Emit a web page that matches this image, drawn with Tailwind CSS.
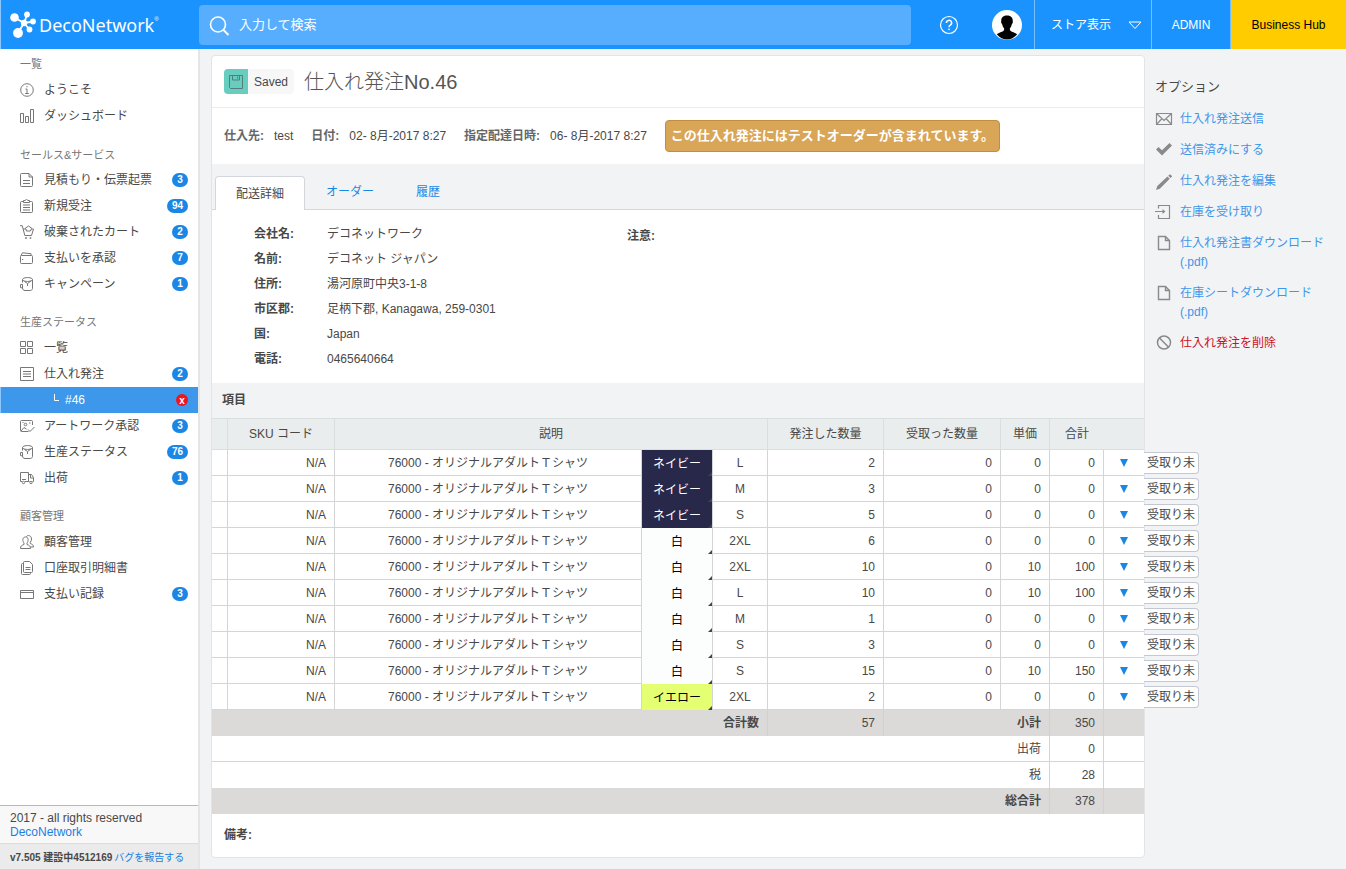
<!DOCTYPE html>
<html lang="ja">
<head>
    <meta charset="UTF-8">
    <meta name="viewport" content="width=device-width, initial-scale=1.0">
    <title>仕入れ発注No.46</title>
    <script src="https://cdn.jsdelivr.net/npm/@tailwindcss/browser@4"></script>
</head>
<body class="min-h-screen flex flex-col bg-[#f2f3f5] font-['Liberation_Sans','Noto_Sans_CJK_JP',sans-serif] text-xs text-[#484848]">

    <!-- Header -->
    <header class="h-[49px] flex items-center bg-[#1a93ff] border-l border-[#8cc8ff] text-white">
        <a href="#" class="w-[198px] shrink-0 flex items-center pl-2">
            <svg class="w-7 h-7 shrink-0" viewBox="0 0 28 28" fill="#fff">
                <path d="M5.500 6.500L15 12M18 4L15 12M24.500 10.500L15 12M20.500 18.500L15 12M9 22L15 12" stroke="#fff" stroke-width="1.800" fill="none"/>
                <circle cx="5.500" cy="6.500" r="4.300"/>
                <circle cx="18" cy="3.500" r="2.900"/>
                <circle cx="24" cy="10.500" r="2.900"/>
                <circle cx="20.500" cy="18.500" r="2.900"/>
                <circle cx="9" cy="22" r="4.900"/>
                <circle cx="15" cy="12" r="3.200"/>
            </svg>
            <span class="ml-[2px] font-['Noto_Sans',sans-serif] text-lg">DecoNetwork</span>
            <span class="text-[6px] mb-3">®</span>
        </a>
        <label class="flex-1 h-10 flex items-center gap-2 pl-[10px] rounded bg-[#57aeff]">
            <svg class="w-[22px] h-[22px] shrink-0" viewBox="0 0 22 22" fill="none" stroke="#fff" stroke-width="1.600">
                <circle cx="9" cy="10.500" r="7.500"/>
                <path d="M14.500 16l5 5" stroke-width="2"/>
            </svg>
            <input type="search" aria-label="検索" placeholder="入力して検索" class="flex-1 min-w-0 bg-transparent outline-none text-[13px] placeholder:text-white">
        </label>
        <button aria-label="ヘルプ" class="ml-7 w-5 h-5">
            <svg class="w-5 h-5" viewBox="0 0 20 20" fill="none" stroke="#fff" stroke-width="1.200">
                <circle cx="10" cy="10" r="8.500"/>
                <path d="M7.400 8a2.600 2.600 0 1 1 3.900 2.200c-.9.500-1.300.9-1.300 2" stroke-width="1.500"/>
                <circle cx="10" cy="14.300" r=".6" fill="#fff" stroke-width=".6"/>
            </svg>
        </button>
        <button aria-label="アカウント" class="ml-[33px] mr-3 w-[30px] h-[30px]">
            <svg class="w-[30px] h-[30px]" viewBox="0 0 30 30">
                <circle cx="15" cy="15" r="15" fill="#fff"/>
                <path d="M15 5.500c-4.300 0-6 2.500-5.700 5.500-.5.800 0 2.500.8 3 .4 2 1 3.200 2 4.200v2c-1.500 1.900-5.500 2.200-7.300 4C7.500 27.800 11.500 29.500 15 29.500s7.500-1.700 10.200-5.300c-1.800-1.800-5.800-2.100-7.300-4v-2c1-1 1.600-2.200 2-4.200.8-.5 1.300-2.200.8-3C21 8 19.300 5.500 15 5.500z" fill="#000"/>
            </svg>
        </button>
        <button class="h-full w-[117px] flex items-center justify-between pl-4 pr-[10px] border-l border-[#76bfff]">
            ストア表示
            <svg class="w-3 h-2" viewBox="0 0 12 8" fill="none" stroke="#fff"><path d="M0 1h12L6 7.500z"/></svg>
        </button>
        <a href="#" class="h-full w-20 flex items-center justify-center border-x border-[#76bfff]">ADMIN</a>
        <a href="#" class="h-full w-[115px] flex items-center justify-center bg-[#fc0] text-black">Business Hub</a>
    </header>

    <div class="flex-1 flex items-stretch">

        <!-- Sidebar -->
        <aside class="w-[200px] shrink-0 flex flex-col bg-white border-r-2 border-[#e4e5e8]">
            <nav class="flex-1 pt-[2px]">
                <h3 class="h-[26px] flex items-center pl-5 text-[11px] text-[#777]">一覧</h3>
                <a href="#" class="h-[26px] flex items-center gap-[10px] pl-5 pr-[10px]">
                    <svg class="w-[14px] h-[14px]" viewBox="0 0 14 14" fill="none" stroke="#777"><circle cx="7" cy="7" r="6.300"/><path d="M5.500 6H7v4.500M5.200 10.500h3.600M7 3v1.300"/></svg>
                    <span>ようこそ</span>
                </a>
                <a href="#" class="h-[26px] flex items-center gap-[10px] pl-5 pr-[10px]">
                    <svg class="w-[14px] h-[14px]" viewBox="0 0 14 14" fill="none" stroke="#777"><path d="M.5 4.500h3v9h-3zM5.500 7.500h3v6h-3zM10.500.5h3v13h-3z"/></svg>
                    <span>ダッシュボード</span>
                </a>

                <h3 class="h-[26px] mt-3 flex items-center pt-[2px] pl-5 text-[11px] text-[#777]">セールス&amp;サービス</h3>
                <a href="#" class="h-[26px] flex items-center gap-[10px] pl-5 pr-[10px]">
                    <svg class="w-[14px] h-[14px]" viewBox="0 0 14 14" fill="none" stroke="#777"><path d="M.5 1.500a1 1 0 0 1 1-1H9L12.500 4v8.500a1 1 0 0 1-1 1h-10a1 1 0 0 1-1-1zM9 .5V4h3.500M3 7.500h7M3 10.500h7"/></svg>
                    <span>見積もり・伝票起票</span>
                    <span class="ml-auto min-w-4 h-[14px] px-[5px] rounded-full bg-[#1a86e6] text-white text-[10px] leading-[14px] font-bold text-center">3</span>
                </a>
                <a href="#" class="h-[26px] flex items-center gap-[10px] pl-5 pr-[10px]">
                    <svg class="w-[14px] h-[14px]" viewBox="0 0 14 14" fill="none" stroke="#777"><path d="M3.500 2.500H1.500a1 1 0 0 0-1 1v9a1 1 0 0 0 1 1h10a1 1 0 0 0 1-1v-9a1 1 0 0 0-1-1h-2M3.500 3.500v-2h1.500L6.500.3 8 1.500h1.500v2zM3 6h7M3 8.500h7M3 11h7"/></svg>
                    <span>新規受注</span>
                    <span class="ml-auto min-w-4 h-[14px] px-[5px] rounded-full bg-[#1a86e6] text-white text-[10px] leading-[14px] font-bold text-center">94</span>
                </a>
                <a href="#" class="h-[26px] flex items-center gap-[10px] pl-5 pr-[10px]">
                    <svg class="w-[14px] h-[14px]" viewBox="0 0 14 14" fill="none" stroke="#777"><path d="M0 .7h2.300l2.500 9.800h6.700l2-6.500H11M3.200 4H6M5 3.500L8.500 1 12 3.500M6 4l.5 2h4l.8-2"/><circle cx="6" cy="13" r=".6"/><circle cx="10.500" cy="13" r=".6"/></svg>
                    <span>破棄されたカート</span>
                    <span class="ml-auto min-w-4 h-[14px] px-[5px] rounded-full bg-[#1a86e6] text-white text-[10px] leading-[14px] font-bold text-center">2</span>
                </a>
                <a href="#" class="h-[26px] flex items-center gap-[10px] pl-5 pr-[10px]">
                    <svg class="w-[14px] h-[14px]" viewBox="0 0 14 14" fill="none" stroke="#777"><path d="M1.500 4.500h10a1 1 0 0 1 1 1v6a1 1 0 0 1-1 1h-10a1 1 0 0 1-1-1v-6a1 1 0 0 1 1-1zM1 4.500L2.500 1.800l8.500.9v1.800M2 8.500h1.200"/></svg>
                    <span>支払いを承認</span>
                    <span class="ml-auto min-w-4 h-[14px] px-[5px] rounded-full bg-[#1a86e6] text-white text-[10px] leading-[14px] font-bold text-center">7</span>
                </a>
                <a href="#" class="h-[26px] flex items-center gap-[10px] pl-5 pr-[10px]">
                    <svg class="w-[14px] h-[14px]" viewBox="0 0 14 14" fill="none" stroke="#777"><ellipse cx="7.500" cy="2.500" rx="5" ry="2"/><path d="M2.500 2.500v3M12.500 2.500v9c0 1-1 2-2 2H5c-1.500 0-2.500-1-2.500-2.500V7.500H.5v3l2 .5M4.500 4.500l3 2 3.500-2.500M7.500 6.500V9"/></svg>
                    <span>キャンペーン</span>
                    <span class="ml-auto min-w-4 h-[14px] px-[5px] rounded-full bg-[#1a86e6] text-white text-[10px] leading-[14px] font-bold text-center">1</span>
                </a>

                <h3 class="h-[26px] mt-3 flex items-center pl-5 text-[11px] text-[#777]">生産ステータス</h3>
                <a href="#" class="h-[26px] flex items-center gap-[10px] pl-5 pr-[10px]">
                    <svg class="w-[14px] h-[14px]" viewBox="0 0 14 14" fill="none" stroke="#777"><path d="M.5.5h5v5h-5zM7.500.5h5v5h-5zM.5 7.500h5v5h-5zM7.500 7.500h5v5h-5z"/></svg>
                    <span>一覧</span>
                </a>
                <a href="#" class="h-[26px] flex items-center gap-[10px] pl-5 pr-[10px]">
                    <svg class="w-[14px] h-[14px]" viewBox="0 0 14 14" fill="none" stroke="#777"><path d="M.5.5h13v13H.5zM3 4.500h8M3 7h8M3 9.500h8"/></svg>
                    <span>仕入れ発注</span>
                    <span class="ml-auto min-w-4 h-[14px] px-[5px] rounded-full bg-[#1a86e6] text-white text-[10px] leading-[14px] font-bold text-center">2</span>
                </a>
                <div class="h-[26px] flex items-center pl-[52px] pr-[10px] bg-[#3d97ea] border-l border-[#8cc8ff] text-white">
                    <svg class="w-2 h-2 mb-1" viewBox="0 0 8 8" fill="none" stroke="#fff"><path d="M1.500 0v6.500H6"/></svg>
                    <a href="#" class="ml-1">#46</a>
                    <button aria-label="閉じる" class="ml-auto w-3 h-3 rounded-full bg-[#f0141e] text-[10px] leading-[11px] font-bold">x</button>
                </div>
                <a href="#" class="h-[26px] flex items-center gap-[10px] pl-5 pr-[10px]">
                    <svg class="w-[14px] h-[14px] overflow-visible" viewBox="0 0 14 14" fill="none" stroke="#777"><path d="M12.500 6V2.500a1 1 0 0 0-1-1h-10a1 1 0 0 0-1 1v9a1 1 0 0 0 1 1h7M1 12l3-3.500 2.500 1.500M8 10.500l2 2L14.500 8M2.500 3.500h1M9 4h1.500"/><circle cx="5.500" cy="5.500" r="1.300"/></svg>
                    <span>アートワーク承認</span>
                    <span class="ml-auto min-w-4 h-[14px] px-[5px] rounded-full bg-[#1a86e6] text-white text-[10px] leading-[14px] font-bold text-center">3</span>
                </a>
                <a href="#" class="h-[26px] flex items-center gap-[10px] pl-5 pr-[10px]">
                    <svg class="w-[14px] h-[14px]" viewBox="0 0 14 14" fill="none" stroke="#777"><ellipse cx="7.500" cy="2.500" rx="5" ry="2"/><path d="M2.500 2.500v3M12.500 2.500v9c0 1-1 2-2 2H5c-1.500 0-2.500-1-2.500-2.500V7.500H.5v3l2 .5M4.500 4.500l3 2 3.500-2.500M7.500 6.500V9"/></svg>
                    <span>生産ステータス</span>
                    <span class="ml-auto min-w-4 h-[14px] px-[5px] rounded-full bg-[#1a86e6] text-white text-[10px] leading-[14px] font-bold text-center">76</span>
                </a>
                <a href="#" class="h-[26px] flex items-center gap-[10px] pl-5 pr-[10px]">
                    <svg class="w-[14px] h-[14px]" viewBox="0 0 14 14" fill="none" stroke="#777"><path d="M2 10.500H.5v-9h8v9H5M8.500 3.500h3l2 3v4H12.500M9.500 10.500h-1M10.500 4v3h3M2 8.500h4"/><circle cx="3.500" cy="11.500" r="1.200"/><circle cx="11" cy="11.500" r="1.200"/></svg>
                    <span>出荷</span>
                    <span class="ml-auto min-w-4 h-[14px] px-[5px] rounded-full bg-[#1a86e6] text-white text-[10px] leading-[14px] font-bold text-center">1</span>
                </a>

                <h3 class="h-[26px] mt-3 flex items-center pl-5 text-[11px] text-[#777]">顧客管理</h3>
                <a href="#" class="h-[26px] flex items-center gap-[10px] pl-5 pr-[10px]">
                    <svg class="w-[14px] h-[14px]" viewBox="0 0 14 14" fill="none" stroke="#777"><path d="M.5 13.500c0-2.500 1-3 3.500-4V8C2.500 6.500 2 2 5.500 2S8.500 6.500 7 8v1.500c2.500 1 3.500 1.500 3.500 4zM6.500 1.500C8-.3 11.500.5 11.500 4c0 1.500-.5 2.500-1.200 3.200V8.500c2 .8 3.200 1.500 3.200 3.500h-3"/></svg>
                    <span>顧客管理</span>
                </a>
                <a href="#" class="h-[26px] flex items-center gap-[10px] pl-5 pr-[10px]">
                    <svg class="w-[14px] h-[14px]" viewBox="0 0 14 14" fill="none" stroke="#777"><path d="M4.500.5h5l3 3v7a1 1 0 0 1-1 1h-7a1 1 0 0 1-1-1v-9a1 1 0 0 1 1-1zM3.500 2.500h-1a1 1 0 0 0-1 1v9a1 1 0 0 0 1 1h7a1 1 0 0 0 1-1v-1M5.500 6.500h5M5.500 8.500h5"/></svg>
                    <span>口座取引明細書</span>
                </a>
                <a href="#" class="h-[26px] flex items-center gap-[10px] pl-5 pr-[10px]">
                    <svg class="w-[14px] h-[14px]" viewBox="0 0 14 14" fill="none" stroke="#777"><path d="M.5 3.500h13v8H.5zM.5 5.500h13"/></svg>
                    <span>支払い記録</span>
                    <span class="ml-auto min-w-4 h-[14px] px-[5px] rounded-full bg-[#1a86e6] text-white text-[10px] leading-[14px] font-bold text-center">3</span>
                </a>
            </nav>

            <div class="border-t border-[#b4b8c6] bg-[#f8f8f8] pl-[10px] pt-[5px] pb-1 leading-[14px]">
                <p>2017 - all rights reserved</p>
                <a href="#" class="text-[#1a7fe0]">DecoNetwork</a>
            </div>
            <div class="h-[26px] flex items-center pt-[2px] border-t border-[#dcdcdc] bg-[#ebebeb] pl-[10px] text-[10px] whitespace-nowrap">
                <b>v7.505 建設中4512169</b>
                <a href="#" class="ml-[2px] text-[#1a7fe0]">バグを報告する</a>
            </div>
        </aside>

        <!-- Purchase order -->
        <main class="flex-1 min-w-0 pl-[11px] pt-[6px] pb-[11px]">
            <div class="h-full bg-white border border-[#e2e4e7] rounded">
                <div class="h-[52px] flex items-center pl-3 border-b border-[#ececee]">
                    <span class="flex items-center bg-[#f7f7f7] rounded-sm">
                        <span class="w-6 h-[25px] flex items-center justify-center rounded-l-sm bg-[#66cdbf]">
                            <svg class="w-[14px] h-[14px]" viewBox="0 0 14 14" fill="none" stroke="#557d78"><path d="M.5.5h13v13h-12l-1-1zM3.500.5v4.500h7V.5M8.500 1.500v2"/></svg>
                        </span>
                        <span class="px-[6px]">Saved</span>
                    </span>
                    <h1 class="ml-[10px] text-xl font-light text-[#555]">仕入れ発注No.46</h1>
                </div>

                <div class="h-14 flex items-center pl-3 whitespace-nowrap">
                    <b class="text-[#666]">仕入先:</b><span class="ml-[10px]">test</span>
                    <b class="ml-[18px] text-[#666]">日付:</b><span class="ml-[10px]">02- 8月-2017 8:27</span>
                    <b class="ml-[18px] text-[#666]">指定配達日時:</b><span class="ml-[10px]">06- 8月-2017 8:27</span>
                    <strong class="ml-[18px] h-8 flex items-center px-[5px] rounded-sm border border-[#c08e3c] bg-[#d9a556] text-white text-[13px]">この仕入れ発注にはテストオーダーが含まれています。</strong>
                </div>

                <!-- Tabs -->
                <div class="h-[46px] flex items-end pl-[3px] bg-[#f2f3f5] border-b border-[#d3d6da]">
                    <button class="w-[90px] h-[34px] -mb-px bg-white border border-b-0 border-[#d3d6da] rounded-t-sm">配送詳細</button>
                    <button class="h-[34px] px-[21px] text-[#1a86e6]">オーダー</button>
                    <button class="h-[34px] px-[21px] text-[#1a86e6]">履歴</button>
                </div>

                <!-- Delivery details -->
                <div class="flex pl-[42px] pt-3 pb-[11px]">
                    <dl class="w-[373px] grid grid-cols-[73px_1fr] leading-[25px]">
                        <dt class="font-bold">会社名:</dt><dd>デコネットワーク</dd>
                        <dt class="font-bold">名前:</dt><dd>デコネット ジャパン</dd>
                        <dt class="font-bold">住所:</dt><dd>湯河原町中央3-1-8</dd>
                        <dt class="font-bold">市区郡:</dt><dd>足柄下郡, Kanagawa, 259-0301</dd>
                        <dt class="font-bold">国:</dt><dd>Japan</dd>
                        <dt class="font-bold">電話:</dt><dd>0465640664</dd>
                    </dl>
                    <b class="leading-7">注意:</b>
                </div>

                <h2 class="h-[35px] flex items-center pb-[2px] pl-[10px] bg-[#f2f3f5] font-bold">項目</h2>

                <table class="w-full table-fixed border-separate border-spacing-0">
                    <colgroup>
                        <col class="w-4"><col class="w-[107px]"><col><col class="w-[71px]"><col class="w-[55px]">
                        <col class="w-[116px]"><col class="w-[117px]"><col class="w-[49px]"><col class="w-[54px]"><col class="w-10">
                    </colgroup>
                    <thead>
                        <tr class="h-8 bg-[#e9eded]">
                            <th class="border-y border-r border-[#d9dfdf]"></th>
                            <th class="border-y border-r border-[#d9dfdf] font-normal">SKU コード</th>
                            <th colspan="3" class="border-y border-r border-[#d9dfdf] font-normal">説明</th>
                            <th class="border-y border-r border-[#d9dfdf] font-normal">発注した数量</th>
                            <th class="border-y border-r border-[#d9dfdf] font-normal">受取った数量</th>
                            <th class="border-y border-r border-[#d9dfdf] font-normal">単価</th>
                            <th class="border-y border-[#d9dfdf] font-normal">合計</th>
                            <th class="border-y border-[#d9dfdf]"></th>
                        </tr>
                    </thead>
                    <tbody id="items"></tbody>
                    <tfoot class="text-right">
                        <tr class="h-[26px] bg-[#dbdad9]">
                            <th colspan="5" class="pr-2 border-r border-[#d0d0d0]">合計数</th>
                            <td class="pr-2 border-r border-[#d0d0d0]">57</td>
                            <th colspan="2" class="pr-2 border-r border-[#d0d0d0]">小計</th>
                            <td class="pr-2 border-r border-[#d0d0d0]">350</td>
                            <td></td>
                        </tr>
                        <tr class="h-[26px]">
                            <th colspan="8" class="pr-2 border-b border-r border-[#d3d5d7] font-normal">出荷</th>
                            <td class="pr-2 border-b border-r border-[#d3d5d7]">0</td>
                            <td class="border-b border-[#d3d5d7]"></td>
                        </tr>
                        <tr class="h-[26px]">
                            <th colspan="8" class="pr-2 border-r border-[#d3d5d7] font-normal">税</th>
                            <td class="pr-2 border-r border-[#d3d5d7]">28</td>
                            <td></td>
                        </tr>
                        <tr class="h-[26px] bg-[#dbdad9]">
                            <th colspan="8" class="pr-2 border-r border-[#d0d0d0]">総合計</th>
                            <td class="pr-2 border-r border-[#d0d0d0]">378</td>
                            <td></td>
                        </tr>
                    </tfoot>
                </table>

                <p class="h-[42px] flex items-center pl-3 font-bold">備考:</p>
            </div>
        </main>

        <!-- Options -->
        <aside class="w-[201px] shrink-0 pl-[10px] pt-7">
            <h2 class="text-[13px] leading-5">オプション</h2>
            <ul class="mt-[13px] flex flex-col gap-3 leading-[19px] text-[#3d97ea]">
                <li class="flex gap-[7px]">
                    <svg class="w-[18px] h-[18px] shrink-0" viewBox="0 0 18 18" fill="none" stroke="#8a8a8a" stroke-width="1.200"><path d="M1.500 3.500h15v11h-15zM1.500 3.500L9 10.500l7.500-7M1.500 14.500l5.500-6M16.500 14.500l-5.500-6"/></svg>
                    <a href="#">仕入れ発注送信</a>
                </li>
                <li class="flex gap-[7px]">
                    <svg class="w-[18px] h-[18px] shrink-0" viewBox="0 0 18 18" fill="#8a8a8a"><path d="M1 8.500L3.500 6 7 9.300 14.500 2 17 4.500l-10 10z"/></svg>
                    <a href="#">送信済みにする</a>
                </li>
                <li class="flex gap-[7px]">
                    <svg class="w-[18px] h-[18px] shrink-0" viewBox="0 0 18 18" fill="#8a8a8a"><path d="M1 18l1.300-4L12.500 4.500l2.200 2.200L4.800 16.700zM13.200 3.800L15 2.300l2.200 2-1.700 1.800z"/></svg>
                    <a href="#">仕入れ発注を編集</a>
                </li>
                <li class="flex gap-[7px]">
                    <svg class="w-[18px] h-[18px] shrink-0" viewBox="0 0 18 18" fill="none" stroke="#8a8a8a" stroke-width="1.200"><path d="M3.500 5.500v-3h11v13h-11v-3.500M0 8.500h9"/><path d="M7.500 6L10.500 8.500l-3 2.500z" fill="#8a8a8a" stroke="none"/></svg>
                    <a href="#">在庫を受け取り</a>
                </li>
                <li class="flex gap-[7px]">
                    <svg class="w-[18px] h-[18px] shrink-0" viewBox="0 0 18 18" fill="none" stroke="#8a8a8a" stroke-width="1.400"><path d="M3.500 2.500h7l4 4v9h-11zM10.500 2.500v4h4"/></svg>
                    <a href="#">仕入れ発注書ダウンロード<br>(.pdf)</a>
                </li>
                <li class="flex gap-[7px]">
                    <svg class="w-[18px] h-[18px] shrink-0" viewBox="0 0 18 18" fill="none" stroke="#8a8a8a" stroke-width="1.400"><path d="M3.500 2.500h7l4 4v9h-11zM10.500 2.500v4h4"/></svg>
                    <a href="#">在庫シートダウンロード<br>(.pdf)</a>
                </li>
                <li class="flex gap-[7px]">
                    <svg class="w-[18px] h-[18px] shrink-0" viewBox="0 0 18 18" fill="none" stroke="#8a8a8a" stroke-width="1.500"><circle cx="9" cy="8.500" r="6.500"/><path d="M4.500 4l9 9"/></svg>
                    <a href="#" class="text-[#d0101c]">仕入れ発注を削除</a>
                </li>
            </ul>
        </aside>
    </div>

    <script>
        const colors = {
            'ネイビー': 'bg-[#28284a] text-white',
            '白': 'bg-[#fcfefe] text-black',
            'イエロー': 'bg-[#e5ff73] text-black'
        };

        // color, size, ordered, received, unit price, total
        const items = [
            ['ネイビー', 'L', 2, 0, 0, 0],
            ['ネイビー', 'M', 3, 0, 0, 0],
            ['ネイビー', 'S', 5, 0, 0, 0],
            ['白', '2XL', 6, 0, 0, 0],
            ['白', '2XL', 10, 0, 10, 100],
            ['白', 'L', 10, 0, 10, 100],
            ['白', 'M', 1, 0, 0, 0],
            ['白', 'S', 3, 0, 0, 0],
            ['白', 'S', 15, 0, 10, 150],
            ['イエロー', '2XL', 2, 0, 0, 0]
        ];

        document.getElementById('items').innerHTML = items.map(([color, size, ordered, received, price, total]) => `
            <tr class="h-[26px] text-right">
                <td class="border-b border-r border-[#d3d5d7]"></td>
                <td class="pr-2 border-b border-r border-[#d3d5d7]">N/A</td>
                <td class="border-b border-r border-[#d3d5d7] text-center">76000 - オリジナルアダルトＴシャツ</td>
                <td class="relative pt-[2px] border-r border-[#d3d5d7] text-center ${colors[color]}">${color}
                    <svg class="absolute right-0 bottom-0 w-1 h-1" viewBox="0 0 4 4" fill="#444"><path d="M4 0v4H0z"/></svg>
                </td>
                <td class="border-b border-r border-[#d3d5d7] text-center">${size}</td>
                <td class="pr-2 border-b border-r border-[#d3d5d7]">${ordered}</td>
                <td class="pr-2 border-b border-r border-[#d3d5d7]">${received}</td>
                <td class="pr-2 border-b border-r border-[#d3d5d7]">${price}</td>
                <td class="pr-2 border-b border-r border-[#d3d5d7]">${total}</td>
                <td class="relative border-b border-[#d3d5d7]">
                    <svg class="mx-auto w-2 h-2" viewBox="0 0 8 8" fill="#1a86e6"><path d="M0 0h8L4 8z"/></svg>
                    <button class="absolute left-full top-[2px] h-[22px] px-[3px] bg-white border border-l-0 border-[#c3c8d2] rounded-r-sm whitespace-nowrap">受取り未</button>
                </td>
            </tr>
        `).join('');
    </script>
</body>
</html>
